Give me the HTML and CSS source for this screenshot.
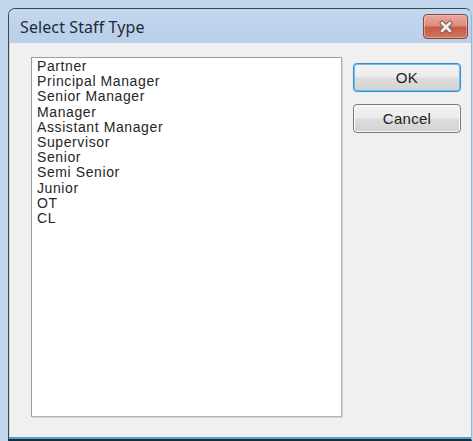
FILE: index.html
```html
<!DOCTYPE html>
<html>
<head>
<meta charset="utf-8">
<link rel="stylesheet" href="styles.css">
</head>
<body>
<div class="desktop">
  <div class="window">
    <div class="titlebar">
      <span class="title">Select Staff Type</span>
      <button class="close" aria-label="Close">
        <svg width="18" height="14" viewBox="0 0 18 14">
          <path d="M5 3 L13 11 M13 3 L5 11" stroke="#7a5a55" stroke-width="4.6" stroke-linecap="round"/>
          <path d="M5 3 L13 11 M13 3 L5 11" stroke="#f2eeed" stroke-width="2.8" stroke-linecap="round"/>
        </svg>
      </button>
    </div>
    <div class="body">
      <ul class="list">
        <li>Partner</li>
        <li>Principal Manager</li>
        <li>Senior Manager</li>
        <li>Manager</li>
        <li>Assistant Manager</li>
        <li>Supervisor</li>
        <li>Senior</li>
        <li>Semi Senior</li>
        <li>Junior</li>
        <li>OT</li>
        <li>CL</li>
      </ul>
      <div class="actions">
        <button class="btn default">OK</button>
        <button class="btn">Cancel</button>
      </div>
    </div>
  </div>
</div>
</body>
</html>
```

FILE: styles.css
```css
html, body {
  margin: 0;
  padding: 0;
  width: 473px;
  height: 441px;
  overflow: hidden;
  background: #c3d7ef;
}

.desktop {
  padding: 8px 0 0 8px;
  height: 441px;
  box-sizing: border-box;
}

.window {
  width: 464px;
  height: 433px;
  box-sizing: border-box;
  border: 1px solid #3a4656;
  border-right-color: #9fb4cc;
  border-bottom: 2px solid #1f2a36;
  border-radius: 7px 7px 0 0;
  background: #bcd2eb;
  display: flex;
  flex-direction: column;
  overflow: hidden;
}

.titlebar {
  height: 34px;
  flex: none;
  display: flex;
  align-items: center;
  justify-content: space-between;
  padding: 0 3px 0 11px;
  background: linear-gradient(#c4d8ee, #b9cfe8);
}

.title {
  font-family: "Noto Sans", sans-serif;
  font-size: 16px;
  color: #1d2a3a;
  letter-spacing: 0.1px;
  margin-top: 2px;
}

.close {
  width: 45px;
  height: 25px;
  margin-top: 1px;
  padding: 0;
  border: 1px solid #7a4a44;
  border-radius: 4px;
  background: linear-gradient(#e9a89b 0%, #de8d7d 45%, #c75a45 55%, #d27561 100%);
  box-shadow: inset 0 0 0 1px rgba(255, 215, 205, 0.45);
  display: flex;
  align-items: center;
  justify-content: center;
}

.body {
  flex: 1;
  display: flex;
  align-items: flex-start;
  gap: 11px;
  padding: 14px 10px 0 22px;
  background: #f0f0f0;
  border-bottom: 2px solid #3fa9d2;
  box-shadow: inset 1px 0 0 #d8d8d8;
}

/* listbox rows: tight 15px pitch, spaced-out glyphs like the old dialog font */
.list {
  list-style: none;
  margin: 0;
  padding: 1px 5px;
  width: 312px;
  height: 360px;
  box-sizing: border-box;
  background: #fff;
  border: 1px solid #9c9c9c;
  border-right-color: #b4b4b4;
  border-bottom-color: #b4b4b4;
  box-shadow: 1px 1px 0 #d4d4d4;
  font-family: "Liberation Sans", Arial, sans-serif;
  font-size: 14px;
  line-height: 15.2px;
  letter-spacing: 0.6px;
  color: #262626;
}

.actions {
  display: flex;
  flex-direction: column;
  gap: 12px;
  padding-top: 6px;
}

.btn {
  width: 108px;
  height: 29px;
  box-sizing: border-box;
  border: 1px solid #7a7a7a;
  border-radius: 4px;
  background: linear-gradient(#f4f4f4 0%, #ebebeb 48%, #dddddd 52%, #d2d2d2 100%);
  box-shadow: inset 0 0 0 1px #fbfbfb;
  font-family: "Liberation Sans", Arial, sans-serif;
  font-size: 15px;
  letter-spacing: 0.3px;
  color: #1e1e1e;
  padding: 0;
}

.btn.default {
  border-color: #3b8ed0;
  box-shadow: inset 0 0 0 1px #6cc1ef, 0 0 1px #8fd0f5;
}
```
